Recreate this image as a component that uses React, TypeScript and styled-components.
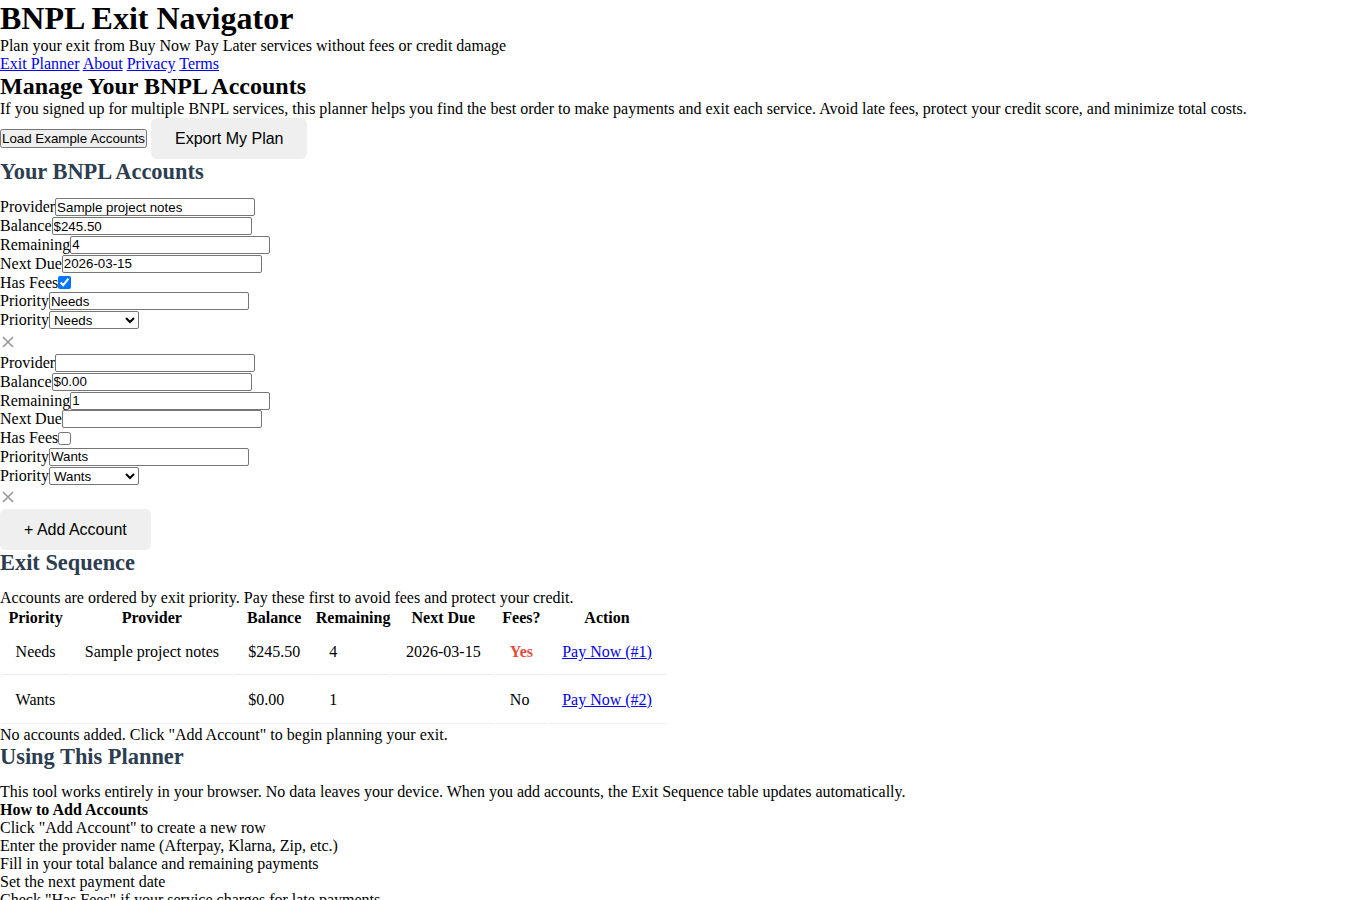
import React, { useState } from "react";
import styled, { createGlobalStyle } from "styled-components";

const GlobalStyle = createGlobalStyle`
  * { margin: 0; padding: 0; box-sizing: border-box; }
  body {
    font-family: "Liberation Serif", "Times New Roman", serif;
    font-size: 16px;
    color: #000;
    background: #fff;
  }
`;

const Title = styled.h1`
  font-size: 32px;
  font-weight: bold;
`;

const Tagline = styled.p``;

const Nav = styled.nav``;

const NavLink = styled.a`
  color: #0000ee;
  text-decoration: underline;
`;

const HeroTitle = styled.h2`
  font-size: 24px;
  font-weight: bold;
`;

const Text = styled.p``;

const Toolbar = styled.div`
  display: flex;
  align-items: center;
  gap: 4px;
`;

const PlainButton = styled.button`
  font: 13.333px "Liberation Sans", Arial, sans-serif;
  color: #000;
`;

const SoftButton = styled.button`
  border: none;
  background: #efefef;
  border-radius: 6px;
  padding: 11.5px 24px;
  font: 16px "Liberation Sans", Arial, sans-serif;
  color: #000;
  cursor: pointer;
`;

const SectionTitle = styled.h2`
  font-size: 22.4px;
  font-weight: bold;
  color: #2c3e50;
  margin-bottom: 13px;
`;

const AccountList = styled.div``;

const AccountCard = styled.div``;

const FieldRow = styled.div`
  display: flex;
  align-items: center;
  height: 18.8px;
`;

const FieldLabel = styled.label`
  white-space: nowrap;
`;

const TextInput = styled.input`
  width: 200px;
  height: 18px;
  padding: 0 1px;
  border: 1px solid #767676;
  border-radius: 2px;
  font: 13.333px "Liberation Sans", Arial, sans-serif;
  color: #000;
  background: #fff;
`;

const Check = styled.input`
  margin: 0;
  width: 13px;
  height: 13px;
`;

const SelectBox = styled.select`
  width: 90px;
  height: 18px;
  border: 1px solid #767676;
  border-radius: 2px;
  font: 13.333px "Liberation Sans", Arial, sans-serif;
  color: #000;
  background: #fff;
`;

const RemoveButton = styled.button`
  display: flex;
  align-items: center;
  justify-content: center;
  width: 16px;
  height: 24px;
  border: none;
  background: none;
  color: #999;
  cursor: pointer;
`;

const Table = styled.table`
  border-spacing: 2px;
`;

const Th = styled.th`
  font-weight: bold;
  text-align: center;
  padding: 0;
`;

const Td = styled.td`
  padding: 13.6px;
  border-bottom: 1px solid #eee;
  text-align: left;
`;

const FeeFlag = styled.span<{ $yes: boolean }>`
  color: ${(p) => (p.$yes ? "#e74c3c" : "#000")};
  font-weight: ${(p) => (p.$yes ? "bold" : "normal")};
`;

const PayLink = styled.a`
  color: #0000ee;
  text-decoration: underline;
`;

const SubTitle = styled.h3`
  font-size: 16px;
  font-weight: bold;
`;

const Steps = styled.ul`
  list-style: none;
`;

const Step = styled.li``;

type Account = {
  id: number;
  provider: string;
  balance: string;
  remaining: string;
  nextDue: string;
  hasFees: boolean;
  priority: string;
};

const XIcon = () => (
  <svg width="12" height="12" viewBox="0 0 12 12" fill="none" stroke="currentColor" strokeWidth="1.7" strokeLinecap="round">
    <path d="M1.5 1.5 L10.5 10.5 M10.5 1.5 L1.5 10.5" />
  </svg>
);

export default function App() {
  const [accounts, setAccounts] = useState<Account[]>([
    { id: 1, provider: "Sample project notes", balance: "$245.50", remaining: "4", nextDue: "2026-03-15", hasFees: true, priority: "Needs" },
    { id: 2, provider: "", balance: "$0.00", remaining: "1", nextDue: "", hasFees: false, priority: "Wants" },
  ]);

  const update = (id: number, key: keyof Account, value: string | boolean) =>
    setAccounts((list) => list.map((a) => (a.id === id ? { ...a, [key]: value } : a)));

  const remove = (id: number) => setAccounts((list) => list.filter((a) => a.id !== id));

  const add = () =>
    setAccounts((list) => [
      ...list,
      { id: Date.now(), provider: "", balance: "$0.00", remaining: "1", nextDue: "", hasFees: false, priority: "Wants" },
    ]);

  return (
    <>
      <GlobalStyle />
      <header>
        <Title>BNPL Exit Navigator</Title>
        <Tagline>Plan your exit from Buy Now Pay Later services without fees or credit damage</Tagline>
        <Nav>
          <NavLink href="#planner">Exit Planner</NavLink> <NavLink href="#about">About</NavLink>{" "}
          <NavLink href="#privacy">Privacy</NavLink> <NavLink href="#terms">Terms</NavLink>
        </Nav>
      </header>
      <main>
        <HeroTitle>Manage Your BNPL Accounts</HeroTitle>
        <Text>
          If you signed up for multiple BNPL services, this planner helps you find the best order to make payments and
          exit each service. Avoid late fees, protect your credit score, and minimize total costs.
        </Text>
        <Toolbar>
          <PlainButton>Load Example Accounts</PlainButton>
          <SoftButton>Export My Plan</SoftButton>
        </Toolbar>

        <section>
          <SectionTitle>Your BNPL Accounts</SectionTitle>
          <AccountList>
            {accounts.map((a) => (
              <AccountCard key={a.id}>
                <FieldRow>
                  <FieldLabel>Provider</FieldLabel>
                  <TextInput value={a.provider} onChange={(e) => update(a.id, "provider", e.target.value)} />
                </FieldRow>
                <FieldRow>
                  <FieldLabel>Balance</FieldLabel>
                  <TextInput value={a.balance} onChange={(e) => update(a.id, "balance", e.target.value)} />
                </FieldRow>
                <FieldRow>
                  <FieldLabel>Remaining</FieldLabel>
                  <TextInput value={a.remaining} onChange={(e) => update(a.id, "remaining", e.target.value)} />
                </FieldRow>
                <FieldRow>
                  <FieldLabel>Next Due</FieldLabel>
                  <TextInput value={a.nextDue} onChange={(e) => update(a.id, "nextDue", e.target.value)} />
                </FieldRow>
                <FieldRow>
                  <FieldLabel>Has Fees</FieldLabel>
                  <Check type="checkbox" checked={a.hasFees} onChange={(e) => update(a.id, "hasFees", e.target.checked)} />
                </FieldRow>
                <FieldRow>
                  <FieldLabel>Priority</FieldLabel>
                  <TextInput value={a.priority} onChange={(e) => update(a.id, "priority", e.target.value)} />
                </FieldRow>
                <FieldRow>
                  <FieldLabel>Priority</FieldLabel>
                  <SelectBox value={a.priority} onChange={(e) => update(a.id, "priority", e.target.value)}>
                    <option>Needs</option>
                    <option>Wants</option>
                    <option>Essential</option>
                  </SelectBox>
                </FieldRow>
                <RemoveButton aria-label="Remove account" onClick={() => remove(a.id)}>
                  <XIcon />
                </RemoveButton>
              </AccountCard>
            ))}
          </AccountList>
          <SoftButton onClick={add}>+ Add Account</SoftButton>
        </section>

        <section>
          <SectionTitle>Exit Sequence</SectionTitle>
          <Text>Accounts are ordered by exit priority. Pay these first to avoid fees and protect your credit.</Text>
          <Table>
            <thead>
              <tr>
                <Th>Priority</Th>
                <Th>Provider</Th>
                <Th>Balance</Th>
                <Th>Remaining</Th>
                <Th>Next Due</Th>
                <Th>Fees?</Th>
                <Th>Action</Th>
              </tr>
            </thead>
            <tbody>
              {accounts.map((a, i) => (
                <tr key={a.id}>
                  <Td>{a.priority}</Td>
                  <Td>{a.provider}</Td>
                  <Td>{a.balance}</Td>
                  <Td>{a.remaining}</Td>
                  <Td>{a.nextDue}</Td>
                  <Td>
                    <FeeFlag $yes={a.hasFees}>{a.hasFees ? "Yes" : "No"}</FeeFlag>
                  </Td>
                  <Td>
                    <PayLink href="#pay">Pay Now (#{i + 1})</PayLink>
                  </Td>
                </tr>
              ))}
            </tbody>
          </Table>
          <Text>No accounts added. Click "Add Account" to begin planning your exit.</Text>
        </section>

        <section>
          <SectionTitle>Using This Planner</SectionTitle>
          <Text>
            This tool works entirely in your browser. No data leaves your device. When you add accounts, the Exit
            Sequence table updates automatically.
          </Text>
          <SubTitle>How to Add Accounts</SubTitle>
          <Steps>
            <Step>Click "Add Account" to create a new row</Step>
            <Step>Enter the provider name (Afterpay, Klarna, Zip, etc.)</Step>
            <Step>Fill in your total balance and remaining payments</Step>
            <Step>Set the next payment date</Step>
            <Step>Check "Has Fees" if your service charges for late payments</Step>
            <Step>Choose a priority: Needs or Wants</Step>
          </Steps>
        </section>
      </main>
    </>
  );
}
